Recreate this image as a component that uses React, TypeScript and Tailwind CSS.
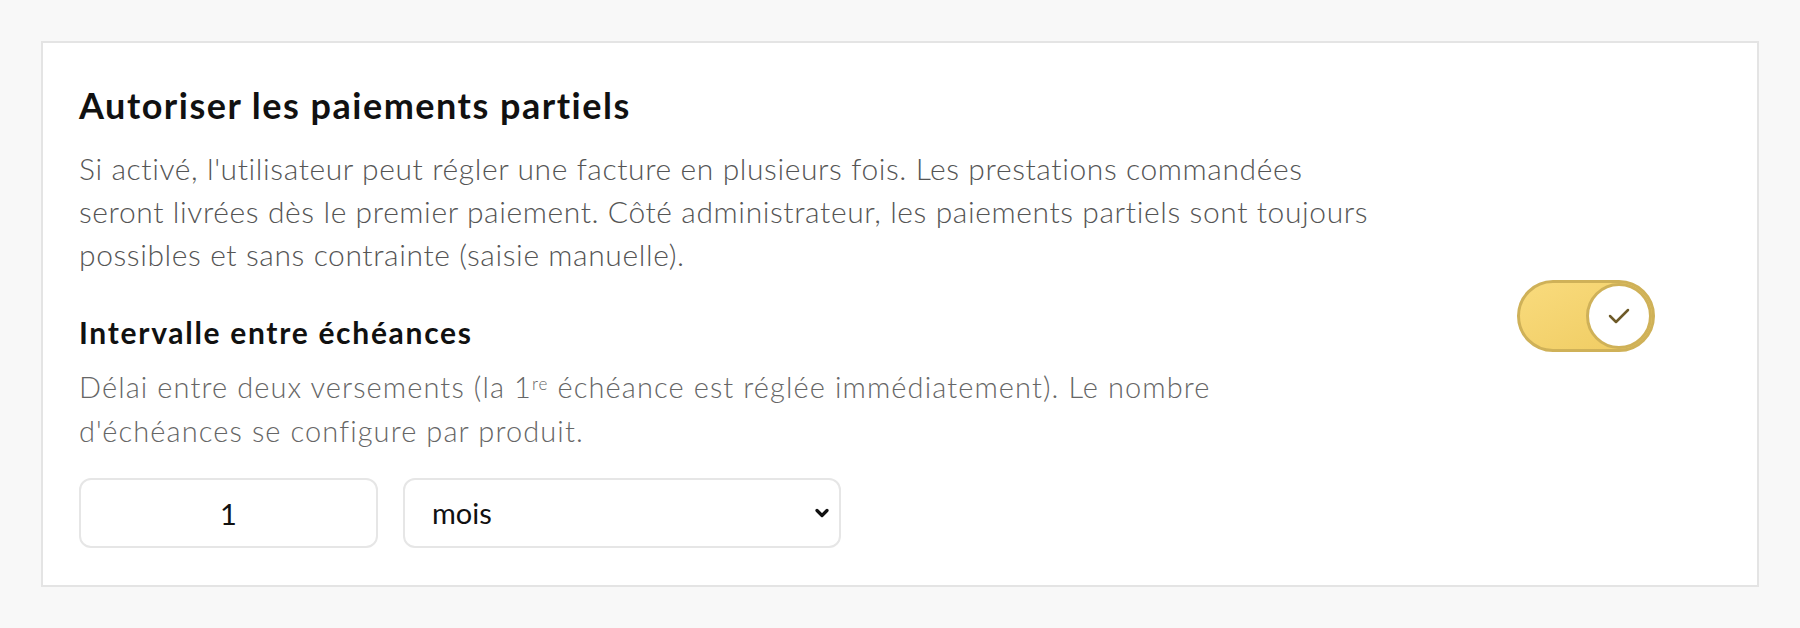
import React, { useState } from "react";

export default function App() {
  const [enabled, setEnabled] = useState(true);
  const [count, setCount] = useState("1");
  const [unit, setUnit] = useState("mois");

  return (
    <div
      className="min-h-screen bg-[#f8f8f8] px-[41px] py-[41px]"
      style={{ fontFamily: "Lato, 'Noto Sans', sans-serif" }}
    >
      <section className="flex items-center justify-between border-2 border-[#e4e4e4] bg-white pl-[36px] pr-[102px] pt-[40px] pb-[37px]">
        <div className="flex flex-col">
          <h3 className="text-[36px] font-bold leading-[44px] tracking-[1.5px] text-[#111]">
            Autoriser les paiements partiels
          </h3>
          <p className="mt-[20px] text-[30px] font-light leading-[43px] tracking-[0.6px] text-[#555]">
            Si activé, l'utilisateur peut régler une facture en plusieurs fois. Les prestations commandées
            <br />
            seront livrées dès le premier paiement. Côté administrateur, les paiements partiels sont toujours
            <br />
            possibles et sans contrainte (saisie manuelle).
          </p>

          <h4 className="mt-[36px] text-[30px] font-bold leading-[40px] tracking-[1.7px] text-[#111]">
            Intervalle entre échéances
          </h4>
          <p className="mt-[13px] text-[29px] font-light leading-[44px] tracking-[1.1px] text-[#666]">
            Délai entre deux versements (la 1<sup className="text-[17px]">re</sup> échéance est réglée immédiatement). Le nombre
            <br />
            d'échéances se configure par produit.
          </p>

          <div className="mt-[25px] flex gap-[25px]">
            <input
              value={count}
              onChange={(e) => setCount(e.target.value)}
              className="h-[70px] w-[299px] rounded-[12px] border-2 border-[#e6e6e6] bg-white text-center text-[29px] text-[#111] outline-none"
            />
            <div className="relative">
              <select
                value={unit}
                onChange={(e) => setUnit(e.target.value)}
                className="h-[70px] w-[438px] appearance-none rounded-[12px] border-2 border-[#e6e6e6] bg-white pl-[27px] text-[29px] text-[#111] outline-none"
              >
                <option value="jours">jours</option>
                <option value="semaines">semaines</option>
                <option value="mois">mois</option>
              </select>
              <svg
                className="pointer-events-none absolute right-[12px] top-1/2 -translate-y-1/2"
                width="14"
                height="10"
                viewBox="0 0 14 10"
              >
                <path d="M2 2.5 L7 7.5 L12 2.5" fill="none" stroke="#111" strokeWidth="3.2" strokeLinecap="round" strokeLinejoin="round" />
              </svg>
            </div>
          </div>
        </div>

        <button
          type="button"
          onClick={() => setEnabled(!enabled)}
          className={`relative flex h-[72px] w-[138px] shrink-0 items-center rounded-full border-[3px] border-[#cfb158] ${
            enabled ? "justify-end bg-gradient-to-br from-[#f9db7d] to-[#efcb60]" : "justify-start bg-[#eee]"
          }`}
        >
          <span className="flex h-[66px] w-[66px] items-center justify-center rounded-full border-[3px] border-[#cfb158] bg-white">
            {enabled && (
              <svg width="24" height="18" viewBox="0 0 24 18">
                <path d="M3 9 L9 15 L21 3" fill="none" stroke="#6e5a28" strokeWidth="2.5" strokeLinecap="round" strokeLinejoin="round" />
              </svg>
            )}
          </span>
        </button>
      </section>
    </div>
  );
}
